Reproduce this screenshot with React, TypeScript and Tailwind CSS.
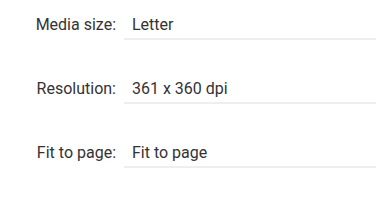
import React from 'react';

const rows = [
    { label: 'Media size:', value: 'Letter' },
    { label: 'Resolution:', value: '361 x 360 dpi' },
    { label: 'Fit to page:', value: 'Fit to page' },
];

export default function App() {
    return (
        <div className="w-[384px] h-[216px] bg-white pt-[15px] font-['Roboto',sans-serif] text-[16px] leading-[20px] text-[#333333] overflow-hidden">
            {rows.map((row) => (
                <div key={row.label} className="flex h-[64px] items-start">
                    <div className="w-[116px] text-right">{row.label}</div>
                    <div className="ml-[8px] w-[252px] h-[25px] border-b-2 border-[#eeeeee] pl-[8px]">
                        {row.value}
                    </div>
                </div>
            ))}
        </div>
    );
}
